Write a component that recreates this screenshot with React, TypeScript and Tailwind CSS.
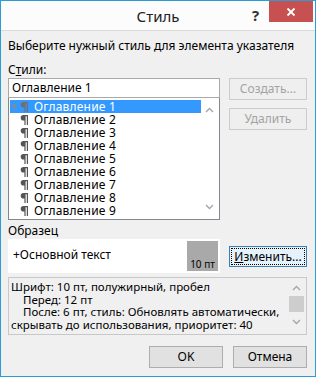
import React from 'react';

const items = [
  'Оглавление 1',
  'Оглавление 2',
  'Оглавление 3',
  'Оглавление 4',
  'Оглавление 5',
  'Оглавление 6',
  'Оглавление 7',
  'Оглавление 8',
  'Оглавление 9',
];

const ArrowUp = () => (
  <svg width="9" height="6" viewBox="0 0 9 6">
    <path d="M1 5 L4.5 1.5 L8 5" stroke="#a6a6a6" strokeWidth="1.4" fill="none" />
  </svg>
);

const ArrowDown = () => (
  <svg width="9" height="6" viewBox="0 0 9 6">
    <path d="M1 1 L4.5 4.5 L8 1" stroke="#a6a6a6" strokeWidth="1.4" fill="none" />
  </svg>
);

const App: React.FC = () => {
  return (
    <div
      className="w-[316px] h-[377px] border border-[#2a9cd6] bg-[#f0f0f0] flex flex-col text-[12px] text-black overflow-hidden"
      style={{ fontFamily: '"Noto Sans", "DejaVu Sans", sans-serif' }}
    >
      {/* title bar */}
      <div className="h-[30px] bg-[#fcfcfc] border-b border-[#dadada] flex items-start relative shrink-0">
        <div className="flex-1 text-center text-[15px] leading-[30px] text-[#222]">Стиль</div>
        <div className="absolute left-[251px] top-[3px] text-[15px] font-bold text-[#333]">?</div>
        <div className="absolute right-[2px] top-0 w-[44px] h-[21px] bg-[#c75050] flex items-center justify-center">
          <svg width="10" height="10" viewBox="0 0 10 10">
            <path d="M1.5 1.5 L8.5 8.5 M8.5 1.5 L1.5 8.5" stroke="#fff" strokeWidth="1.8" />
          </svg>
        </div>
      </div>

      <div className="px-[7px] flex flex-col">
        <div className="mt-[7px] leading-[15px]">Выберите нужный стиль для элемента указателя</div>

        <div className="flex mt-[9px]">
          {/* left column */}
          <div className="w-[212px] flex flex-col">
            <div className="leading-[15px]">
              С<span className="underline">т</span>или:
            </div>
            <div className="mt-[1px] h-[20px] bg-white border border-[#a9a9a9] px-[3px] leading-[18px]">Оглавление 1</div>
            <div className="h-[122px] bg-white border border-[#828790] border-t-0 flex p-[1px]">
              <div className="flex-1 flex flex-col pt-[1px]">
                {items.map((it, i) => (
                  <div
                    key={it}
                    className={
                      'h-[13px] flex items-center leading-[13px] ' +
                      (i === 0 ? 'bg-[#3399ff] text-white' : '')
                    }
                  >
                    <span className="w-[10px] flex justify-center">
                      {i === 0 && (
                        <svg width="4" height="7" viewBox="0 0 4 7">
                          <path d="M0 0 L4 3.5 L0 7 Z" fill="#8a8a8a" />
                        </svg>
                      )}
                    </span>
                    <span className="w-[14px] flex items-center">
                      <svg width="8" height="10" viewBox="0 0 8 10">
                        <path
                          d="M3.5 0 H8 V10 H6.8 V1.2 H5.6 V10 H4.4 V5.6 H3.5 A2.8 2.8 0 0 1 3.5 0 Z"
                          fill={i === 0 ? '#6f6f6f' : '#555'}
                        />
                      </svg>
                    </span>
                    <span className="tracking-[0.2px]">{it}</span>
                  </div>
                ))}
              </div>
              <div className="w-[17px] flex flex-col items-center justify-between py-[8px]">
                <ArrowUp />
                <ArrowDown />
              </div>
            </div>
          </div>

          {/* right column */}
          <div className="ml-[9px] w-[78px] flex flex-col pt-[16px] gap-[8px]">
            <div className="h-[22px] border border-[#cccccc] bg-[#efefef] text-[#a3a3a3] flex items-center justify-center">
              Создать...
            </div>
            <div className="h-[22px] border border-[#cccccc] bg-[#efefef] text-[#a3a3a3] flex items-center justify-center">
              Удалить
            </div>
          </div>
        </div>

        <div className="mt-[3px] leading-[15px]">Образец</div>

        <div className="flex items-center mt-[1px]">
          <div className="w-[212px] h-[34px] border-2 border-white flex">
            <div className="flex-1 bg-white flex items-center pl-[3px] pb-[2px]">+Основной текст</div>
            <div className="w-[31px] bg-[#a9a9a9] flex items-end justify-center pb-[1px] text-[10px] leading-[12px]">10 пт</div>
          </div>
          <div className="ml-[9px] w-[78px] h-[21px] border border-[#3c7fb1] bg-[#e5f1fb] p-[1px] mt-[1px]">
            <div className="w-full h-full border border-dotted border-black flex items-center justify-center">
              <span>
                <span className="underline">И</span>зменить...
              </span>
            </div>
          </div>
        </div>

        <div className="mt-[4px] w-[299px] h-[58px] border border-[#c8c8c8] bg-[#f0f0f0] flex">
          <div className="flex-1 pl-[2px] pt-[3px] leading-[12.7px] text-[11.5px] whitespace-nowrap">
            <div>Шрифт: 10 пт, полужирный, пробел</div>
            <div className="pl-[12px]">Перед: 12 пт</div>
            <div className="pl-[12px]">После: 6 пт, стиль: Обновлять автоматически,</div>
            <div>скрывать до использования, приоритет: 40</div>
          </div>
          <div className="w-[16px] flex flex-col items-center pt-[7px] mr-[2px]">
            <ArrowUp />
            <div className="w-[15px] h-[16px] bg-[#cdcdcd] mt-[5px]" />
            <div className="mt-[7px]">
              <ArrowDown />
            </div>
          </div>
        </div>

        <div className="flex justify-end gap-[10px] mt-[11px] pr-[1px]">
          <div className="w-[74px] h-[22px] border border-[#adadad] bg-[#e1e1e1] flex items-center justify-center">OK</div>
          <div className="w-[74px] h-[22px] border border-[#adadad] bg-[#e1e1e1] flex items-center justify-center">Отмена</div>
        </div>
      </div>
    </div>
  );
};

export default App;
